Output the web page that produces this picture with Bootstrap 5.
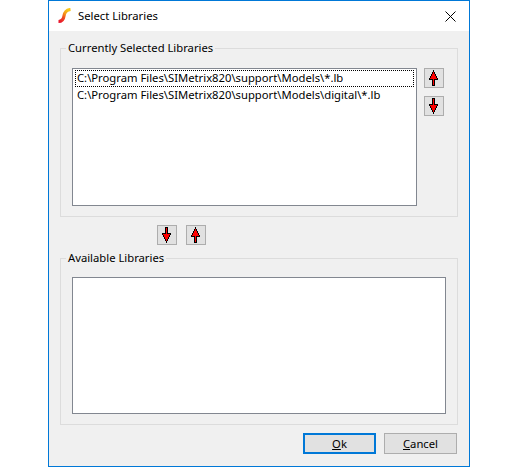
<!DOCTYPE html>
<html lang="en">
<head>
  <meta charset="UTF-8">
  <meta name="viewport" content="width=device-width, initial-scale=1.0">
  <title>Select Libraries</title>
  <link href="https://cdn.jsdelivr.net/npm/bootstrap@5.3.0/dist/css/bootstrap.min.css" rel="stylesheet">
  <style>
    body { background: #fff; font-family: "Noto Sans", sans-serif; font-size: 11.25px; line-height: 16px; color: #000; }
    .dlg-window { width: 422px; height: 467px; margin-left: 48px; border: 1px solid #0078d7; background: #f0f0f0; }
    .dlg-title { height: 30px; background: #fff; padding-left: 8px; padding-right: 13px; }
    .dlg-title-text { margin-left: 5px; }
    .dlg-body { padding: 0 11px 0 11px; }
    .lib-group { border: 1px solid #dcdcdc; margin: 0; min-width: 0; padding: 0 11px; }
    .lib-group legend { float: none; width: auto; font-size: 11.25px; line-height: 16px; margin: 0 0 0 -6px; padding: 0 2px; }
    .group-top { height: 177px; margin-top: 9px; }
    .group-bottom { height: 175px; margin-top: 5px; }
    .lib-list { background: #fff; border: 1px solid #828790; border-radius: 0; padding: 1px 2px; overflow: hidden; }
    .list-top { width: 345px; height: 138px; margin-top: 12px; }
    .list-bottom { width: 374px; height: 137px; margin-top: 11px; }
    .lib-row { background: transparent; border: 1px dotted transparent; border-radius: 0; padding: 0 1px; height: 17px; line-height: 14px; white-space: nowrap; color: #000; }
    .lib-row.is-focused { border-color: #000; }
    .arrow-btn { width: 20px; height: 20px; padding: 0; background: #e1e1e1; border: 1px solid #adadad; border-radius: 0; line-height: 0; }
    .arrow-btn svg { display: block; margin: -1px; }
    .side-btns { margin-top: 12px; margin-left: 7px; gap: 8px; }
    .mid-btns { margin-top: 8px; margin-left: 97px; gap: 9px; }
    .dlg-btn { width: 73px; height: 21px; padding: 0; font-size: 11.25px; line-height: 19px; color: #000; background: #e1e1e1; border: 1px solid #adadad; border-radius: 0; }
    .dlg-btn.is-default { border: 2px solid #0078d7; line-height: 17px; }
    .dlg-actions { margin-top: 8px; margin-right: 1px; gap: 8px; }
  </style>
</head>
<body>
  <div class="dlg-window d-flex flex-column">
    <!-- Title bar -->
    <div class="dlg-title d-flex align-items-center">
      <svg width="16" height="16" viewBox="0 0 16 16" fill="none">
        <defs>
          <linearGradient id="logoGrad" x1="0" y1="1" x2="0.7" y2="0">
            <stop offset="0" stop-color="#e8112d"/>
            <stop offset="0.45" stop-color="#f0531f"/>
            <stop offset="0.7" stop-color="#f59a1b"/>
            <stop offset="1" stop-color="#f5c518"/>
          </linearGradient>
        </defs>
        <path d="M1.5 13.5 C5 13.5 6.5 11.5 7 8 C7.5 4.5 9 2 13.5 1.5" stroke="url(#logoGrad)" stroke-width="3.2"/>
      </svg>
      <span class="dlg-title-text">Select Libraries</span>
      <svg class="ms-auto" width="11" height="11" viewBox="0 0 11 11">
        <path d="M0.5 0.5 L10.5 10.5 M10.5 0.5 L0.5 10.5" stroke="#000" stroke-width="1"/>
      </svg>
    </div>

    <div class="dlg-body flex-grow-1">
      <!-- Selected libraries -->
      <fieldset class="lib-group group-top">
        <legend>Currently Selected Libraries</legend>
        <div class="d-flex">
          <div class="lib-list list-top list-group">
            <div class="lib-row is-focused">C:\Program Files\SIMetrix820\support\Models\*.lb</div>
            <div class="lib-row">C:\Program Files\SIMetrix820\support\Models\digital\*.lb</div>
          </div>
          <div class="side-btns d-flex flex-column">
            <button type="button" class="btn arrow-btn" aria-label="Move up">
              <svg width="20" height="20" viewBox="0 0 20 20" shape-rendering="crispEdges"><path d="M9 2H10V4H11V6H12V8H13V10H14V12H11V18H8V12H5V10H6V8H7V6H8V4H9Z" fill="#000"/><path d="M9 4H10V6H11V8H12V10H13V11H10V17H9V11H6V10H7V8H8V6H9Z" fill="#f00"/></svg>
            </button>
            <button type="button" class="btn arrow-btn" aria-label="Move down">
              <svg width="20" height="20" viewBox="0 0 20 20" shape-rendering="crispEdges"><path d="M9 18H10V16H11V14H12V12H13V10H14V8H11V2H8V8H5V10H6V12H7V14H8V16H9Z" fill="#000"/><path d="M9 16H10V14H11V12H12V10H13V9H10V3H9V9H6V10H7V12H8V14H9Z" fill="#f00"/></svg>
            </button>
          </div>
        </div>
      </fieldset>

      <!-- Transfer buttons -->
      <div class="mid-btns d-flex">
        <button type="button" class="btn arrow-btn" aria-label="Remove">
          <svg width="20" height="20" viewBox="0 0 20 20" shape-rendering="crispEdges"><path d="M9 18H10V16H11V14H12V12H13V10H14V8H11V2H8V8H5V10H6V12H7V14H8V16H9Z" fill="#000"/><path d="M9 16H10V14H11V12H12V10H13V9H10V3H9V9H6V10H7V12H8V14H9Z" fill="#f00"/></svg>
        </button>
        <button type="button" class="btn arrow-btn" aria-label="Add">
          <svg width="20" height="20" viewBox="0 0 20 20" shape-rendering="crispEdges"><path d="M9 2H10V4H11V6H12V8H13V10H14V12H11V18H8V12H5V10H6V8H7V6H8V4H9Z" fill="#000"/><path d="M9 4H10V6H11V8H12V10H13V11H10V17H9V11H6V10H7V8H8V6H9Z" fill="#f00"/></svg>
        </button>
      </div>

      <!-- Available libraries -->
      <fieldset class="lib-group group-bottom">
        <legend>Available Libraries</legend>
        <div class="lib-list list-bottom list-group"></div>
      </fieldset>

      <div class="dlg-actions d-flex justify-content-end">
        <button type="button" class="btn dlg-btn is-default"><u>O</u>k</button>
        <button type="button" class="btn dlg-btn"><u>C</u>ancel</button>
      </div>
    </div>
  </div>

  <script src="https://cdn.jsdelivr.net/npm/bootstrap@5.3.0/dist/js/bootstrap.bundle.min.js"></script>
</body>
</html>
